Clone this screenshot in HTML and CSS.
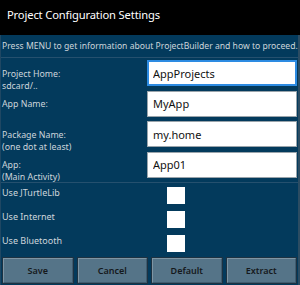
FILE: index.html
```html
<!DOCTYPE html>
<html lang="en">
<head>
    <meta charset="UTF-8">
    <title>Project Configuration Settings</title>
    <link rel="stylesheet" href="styles.css">
</head>
<body>
    <div class="dialog">
        <div class="title">Project Configuration Settings</div>
        <div class="content">
            <div class="hint">Press MENU to get information about ProjectBuilder and how to proceed.</div>

            <div class="fields">
                <div class="field">
                    <label for="home">Project Home:<br>sdcard/..</label>
                    <input type="text" id="home" class="focused" value="AppProjects">
                </div>
                <div class="field">
                    <label for="appname">App Name:</label>
                    <input type="text" id="appname" value="MyApp">
                </div>
                <div class="field">
                    <label for="package">Package Name:<br>(one dot at least)</label>
                    <input type="text" id="package" value="my.home">
                </div>
                <div class="field">
                    <label for="activity">App:<br>(Main Activity)</label>
                    <input type="text" id="activity" value="App01">
                </div>
            </div>

            <div class="checks">
                <div class="check-row">
                    <span class="check-label">Use JTurtleLib</span>
                    <span class="box"></span>
                </div>
                <div class="check-row">
                    <span class="check-label">Use Internet</span>
                    <span class="box"></span>
                </div>
                <div class="check-row">
                    <span class="check-label">Use Bluetooth</span>
                    <span class="box"></span>
                </div>
            </div>

            <div class="buttons">
                <button type="button" class="btn">Save</button>
                <button type="button" class="btn">Cancel</button>
                <button type="button" class="btn">Default</button>
                <button type="button" class="btn">Extract</button>
            </div>
        </div>
    </div>
</body>
</html>
```

FILE: styles.css
```css
* {
    box-sizing: border-box;
    font-family: 'Noto Sans', 'Open Sans', sans-serif;
}

body {
    margin: 0;
    background-color: #000;
}

.dialog {
    width: 300px;
    height: 285px;
    background-color: #000;
    overflow: hidden;
}

.title {
    height: 35px;
    padding-left: 7px;
    padding-top: 6px;
    color: #fff;
    font-size: 11.2px;
    letter-spacing: -0.15px;
    line-height: 18px;
}

.content {
    height: 250px;
    background-color: #033a5c;
    border-right: 2px solid #2c4c62;
    border-left: 1px solid #1f4763;
}

.hint {
    height: 23px;
    padding: 4px 0 0 1px;
    color: #cdd5db;
    font-size: 8.6px;
    line-height: 14px;
    white-space: nowrap;
    border-bottom: 1px solid #25506e;
}

.fields {
    padding-top: 2px;
    display: flex;
    flex-direction: column;
}

.field {
    display: flex;
    height: 30.5px;
}

label {
    width: 146px;
    padding: 7.5px 0 0 1px;
    color: #cdd5db;
    font-size: 8.8px;
    line-height: 12px;
}

input {
    width: 150px;
    height: 26px;
    padding: 0 5px;
    border: 1px solid #9aa4ab;
    background-color: #fff;
    color: #111;
    font-size: 11px;
    outline: none;
}

input.focused {
    border: 2px solid #2d8be2;
    padding: 0 4px;
}

.checks {
    padding-top: 4px;
    border-top: 1px solid #25506e;
    display: flex;
    flex-direction: column;
    gap: 7px;
}

.check-row {
    display: flex;
    height: 17px;
}

.check-label {
    width: 166px;
    padding: 0 0 0 1px;
    color: #cdd5db;
    font-size: 9px;
    line-height: 12px;
}

.box {
    width: 18px;
    height: 17px;
    background-color: #fff;
}

.buttons {
    display: flex;
    gap: 5px;
    padding: 6px 0 0 2px;
}

.btn {
    width: 69.5px;
    height: 25px;
    padding: 0;
    background-color: #557488;
    border: 1px solid #7f95a3;
    border-right-color: #3f5c70;
    border-bottom-color: #3f5c70;
    box-shadow: 0 0 0 1px #1d3242;
    color: #15191c;
    font-size: 9px;
    font-weight: 600;
}
```
